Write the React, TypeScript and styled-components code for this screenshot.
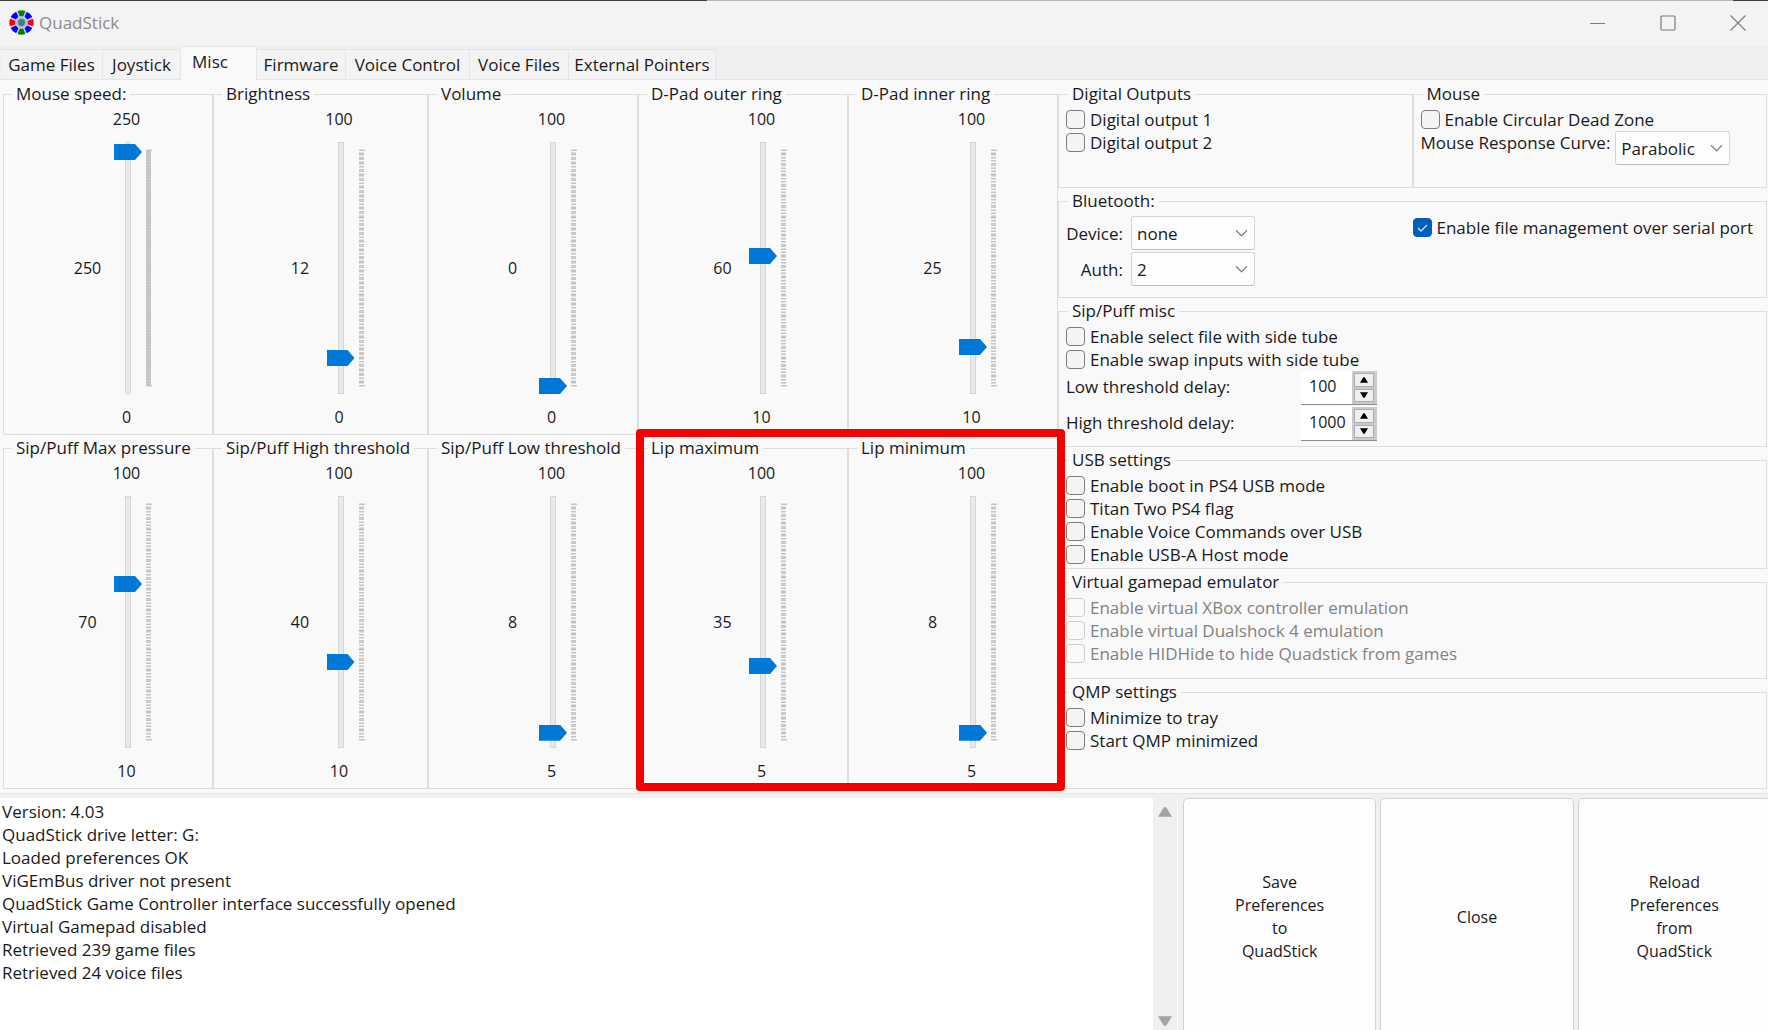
import React, { useState } from 'react';
import styled, { createGlobalStyle } from 'styled-components';

const LINE = '#dedede';
const INK = '#1a1a1a';

const GlobalStyle = createGlobalStyle`
  *, *::before, *::after { box-sizing: border-box; }
  body { margin: 0; background: #f0f0f0; }
  body, button, input, select, textarea {
    font-family: "Open Sans", "Noto Sans", sans-serif;
    font-size: 17px;
    line-height: 23px;
    color: ${INK};
  }
`;

const Window = styled.div`
  display: flex;
  flex-direction: column;
  height: 100vh;
  min-height: 960px;
  overflow: hidden;
`;

const DesktopEdge = styled.div`
  flex: none;
  height: 1px;
  background: linear-gradient(90deg, #443f43 0 40%, #b9b7ba 40% 98%, #443f43 98%);
`;

const TitleBar = styled.header`
  display: flex;
  flex: none;
  align-items: center;
  height: 45px;
  padding: 0 9px 2px;
  background: #f3f3f3;
`;

const AppTitle = styled.h1`
  flex: 1;
  margin: 0 0 0 5px;
  font-size: 17px;
  font-weight: 400;
  color: #8c8c8c;
`;

const CaptionButtons = styled.div`
  display: flex;
  gap: 28px;
`;

const CaptionButton = styled.button`
  display: grid;
  place-items: center;
  width: 42px;
  height: 36px;
  padding: 0;
  border: 0;
  background: none;
`;

const TabStrip = styled.div`
  display: flex;
  flex: none;
  align-items: flex-end;
  height: 34px;
  padding-left: 1px;
  border-bottom: 1px solid #e5e5e5;
  background: #efefef;
`;

const Tab = styled.button<{ $width: number; $active?: boolean }>`
  width: ${p => p.$width}px;
  height: ${p => (p.$active ? 34 : 30)}px;
  margin-bottom: ${p => (p.$active ? -1 : 0)}px;
  padding: ${p => (p.$active ? '0 17px 4px 0' : '0')};
  border: 1px solid #e5e5e5;
  border-width: 1px 1px 0 0;
  background: ${p => (p.$active ? '#f9f9f9' : '#f3f3f3')};
  white-space: nowrap;
`;

const Page = styled.main`
  display: grid;
  flex: none;
  grid-template-columns: 210fr 215fr 210fr 210fr 210fr 709fr;
  grid-template-rows: auto auto;
  row-gap: 2px;
  padding: 3px 1px 4px 3px;
  border-bottom: 1px solid #e5e5e5;
  background: #f9f9f9;
`;

const Group = styled.fieldset`
  min-width: 0;
  margin: 0;
  padding: 3px 7px 0;
  border: 1px solid ${LINE};
`;

const Legend = styled.legend`
  height: 22px;
  margin-left: 2px;
  padding: 0 4px;
  line-height: 22px;
  white-space: nowrap;
`;

const SliderGroup = styled(Group)<{ $column: number; $row: number }>`
  grid-column: ${p => p.$column};
  grid-row: ${p => p.$row};
  padding: 3px 0 6px;
  & > legend { margin-left: 8px; }
`;

const SliderGrid = styled.div`
  display: grid;
  grid-template-columns: 1fr 39px 39px 1fr;
  grid-template-rows: 22px 276px 22px;
  align-items: center;
  padding-right: 2px;
  font-size: 16px;
  line-height: 22px;
`;

const Limit = styled.span`
  grid-column: 3;
  text-align: center;
`;

const Current = styled.output`
  grid-column: 2;
  grid-row: 1 / 4;
  font-size: 16px;
  text-align: center;
`;

const Range = styled.input`
  grid-column: 3;
  grid-row: 2;
  appearance: none;
  writing-mode: vertical-lr;
  direction: rtl;
  width: 28px;
  height: 252px;
  margin: 0 0 0 7px;
  background: none;

  &::-webkit-slider-runnable-track {
    width: 6px;
    height: 252px;
    border: 1px solid #d6d6d6;
    background: #e7eaea;
  }

  &::-webkit-slider-thumb {
    appearance: none;
    width: 28px;
    height: 16px;
    margin: -1px 0 -1px -12px;
    background: #0078d7;
    clip-path: polygon(0 0, 75% 0, 100% 50%, 75% 100%, 0 100%);
  }
`;

const Ticks = styled.svg`
  grid-column: 4;
  grid-row: 2;
`;

const RedFrame = styled.div`
  grid-column: 4 / 6;
  grid-row: 2;
  z-index: 1;
  margin: -8px -7px -2px -2px;
  border: 8px solid #f50000;
  border-radius: 4px;
  pointer-events: none;
`;

const Options = styled.div`
  display: grid;
  grid-column: 6;
  grid-row: 1 / 3;
  grid-template-rows: 105fr 108fr 147fr 120fr 108fr 108fr;
  gap: 2px 0;
`;

const Halves = styled.div`
  display: grid;
  grid-template-columns: 1fr 1fr;
`;

const BluetoothBody = styled.div`
  display: grid;
  grid-template-columns: 1fr 1fr;
  padding-top: 1px;
`;

const BluetoothFields = styled.div`
  display: grid;
  grid-template-columns: 57px 124px;
  gap: 2px 8px;
  align-items: center;
  justify-items: end;
`;

const Check = styled.label<{ $muted?: boolean }>`
  display: flex;
  align-items: center;
  gap: 5px;
  width: max-content;
  height: 23px;
  color: ${p => (p.$muted ? '#838383' : INK)};
  white-space: nowrap;
`;

const Box = styled.input`
  appearance: none;
  flex: none;
  width: 19px;
  height: 19px;
  margin: 0;
  border: 1px solid #7d7d7d;
  border-radius: 4px;
  background: #f4f4f4;

  &:disabled {
    border-color: #cdcdcd;
    background: #fafafa;
  }

  &:checked {
    border-color: #005fb8;
    background: #005fb8 url("data:image/svg+xml,%3Csvg xmlns='http://www.w3.org/2000/svg' viewBox='0 0 17 17'%3E%3Cpath d='M4 9l3 3 6-6' fill='none' stroke='%23cfe3f6' stroke-width='1.3'/%3E%3C/svg%3E") center / 17px 17px no-repeat;
  }
`;

const Select = styled.select<{ $width: number }>`
  appearance: none;
  width: ${p => p.$width}px;
  height: 34px;
  padding: 0 20px 0 5px;
  border: 1px solid #d4d4d4;
  border-bottom-color: #bdbdbd;
  border-radius: 3px;
  background: #fdfdfd url("data:image/svg+xml,%3Csvg xmlns='http://www.w3.org/2000/svg' viewBox='0 0 14 8'%3E%3Cpath d='M1 1l6 6 6-6' fill='none' stroke='%23868686' stroke-width='1.4'/%3E%3C/svg%3E") right 6px center / 13px 8px no-repeat;
`;

const CurveRow = styled.div`
  display: flex;
  align-items: flex-start;
  gap: 5px;
  white-space: nowrap;
`;

const DelayRow = styled.div`
  display: grid;
  grid-template-columns: 235px 76px;
  height: 34px;
  margin-bottom: 2px;
  line-height: 31px;
`;

const Spinner = styled.div`
  display: grid;
  grid-template-columns: 1fr 25px;
  border-bottom: 1px solid #8e8e8e;
`;

const SpinInput = styled.input`
  min-width: 0;
  padding: 0 0 2px 8px;
  border: 0;
  background: #ffffff;
  font-size: 16px;
`;

const SpinButtons = styled.div`
  display: grid;
  grid-template-rows: 1fr 1fr;
  gap: 2px;
  padding: 2px 3px 2px 2px;
  background: #c9cacf;
`;

const SpinButton = styled.button`
  display: grid;
  place-items: center;
  min-height: 0;
  padding: 0;
  border: 1px solid #adadad;
  background: #efefef;
`;

const BottomPanel = styled.section`
  display: grid;
  flex: 1;
  grid-template-columns: 1153fr 25px 590fr;
  min-height: 0;
  padding-top: 4px;
  background: #f0f0f0;
`;

const Log = styled.textarea`
  width: 100%;
  height: 100%;
  padding: 2px;
  border: 0;
  outline: 0;
  resize: none;
  overflow: hidden;
  background: #ffffff;
  white-space: pre;
`;

const ScrollBar = styled.div`
  display: flex;
  flex-direction: column;
  justify-content: space-between;
  padding: 7px 0 2px;
  border-right: 1px solid #fafafa;
`;

const ScrollButton = styled.button`
  display: grid;
  place-items: center;
  height: 14px;
  padding: 0;
  border: 0;
  background: none;
`;

const Actions = styled.div`
  display: grid;
  grid-template-columns: 1fr 1fr 1fr;
  gap: 4px;
  margin: 0 -3px -6px 5px;
`;

const ActionButton = styled.button`
  padding: 0;
  border: 1px solid #d2d2d2;
  border-radius: 5px;
  background: #fdfdfd;
  font-size: 16px;
  white-space: pre-line;
`;

interface SliderSpec {
  name: string;
  min: number;
  max: number;
  value: number;
}

const SLIDERS: SliderSpec[] = [
  { name: 'Mouse speed:', min: 0, max: 250, value: 250 },
  { name: 'Brightness', min: 0, max: 100, value: 12 },
  { name: 'Volume', min: 0, max: 100, value: 0 },
  { name: 'D-Pad outer ring', min: 10, max: 100, value: 60 },
  { name: 'D-Pad inner ring', min: 10, max: 100, value: 25 },
  { name: 'Sip/Puff Max pressure', min: 10, max: 100, value: 70 },
  { name: 'Sip/Puff High threshold', min: 10, max: 100, value: 40 },
  { name: 'Sip/Puff Low threshold', min: 5, max: 100, value: 8 },
  { name: 'Lip maximum', min: 5, max: 100, value: 35 },
  { name: 'Lip minimum', min: 5, max: 100, value: 8 },
];

const SLIDERS_PER_ROW = 5;

const TABS = [
  { name: 'Game Files', width: 102 },
  { name: 'Joystick', width: 78 },
  { name: 'Misc', width: 76 },
  { name: 'Firmware', width: 89 },
  { name: 'Voice Control', width: 124 },
  { name: 'Voice Files', width: 99 },
  { name: 'External Pointers', width: 147 },
];

const LOG_LINES = [
  'Version: 4.03',
  'QuadStick drive letter: G:',
  'Loaded preferences OK',
  'ViGEmBus driver not present',
  'QuadStick Game Controller interface successfully opened',
  'Virtual Gamepad disabled',
  'Retrieved 239 game files',
  'Retrieved 24 voice files',
];

function Logo() {
  const colors = ['#008000', '#0000ff', '#ff0000', '#0000ff', '#008000', '#0000ff', '#ff0000', '#0000ff'];
  return (
    <svg width="25" height="25" viewBox="-12 -12 24 24" aria-hidden="true">
      <circle r="11" fill="#c9d2dc" />
      {colors.map((color, i) => (
        <path key={i} d="M-1.8 -6L-3.7 -11Q0 -12.4 3.7 -11L1.8 -6Z" fill={color} transform={`rotate(${i * 45})`} />
      ))}
      <circle r="5" fill="#a9b9bb" />
      <circle r="3.3" fill="#3b8083" />
    </svg>
  );
}

/* Marks snap to a 1.5px device grid, so dense scales merge into short blocks. */
function TickMarks({ steps }: { steps: number }) {
  const cell = 1.5;
  const travel = 235;
  return (
    <Ticks width="7" height="252" aria-hidden="true">
      {Array.from({ length: steps + 1 }, (_, i) => {
        const end = i === 0 || i === steps;
        const y = 7.5 + Math.round((i * travel) / cell / steps) * cell;
        return <rect key={i} x="0" y={y} width={end ? 6 : 5} height={cell} fill="#c4c4c4" />;
      })}
    </Ticks>
  );
}

function SliderPanel({ spec, index }: { spec: SliderSpec; index: number }) {
  const { name, min, max, value } = spec;
  const [current, setCurrent] = useState(value);
  return (
    <SliderGroup $column={(index % SLIDERS_PER_ROW) + 1} $row={Math.floor(index / SLIDERS_PER_ROW) + 1}>
      <Legend>{name}</Legend>
      <SliderGrid>
        <Limit>{max}</Limit>
        <Current>{current}</Current>
        <Range
          type="range"
          aria-label={name}
          min={min}
          max={max}
          value={current}
          onChange={e => setCurrent(Number(e.target.value))}
        />
        <TickMarks steps={max - min} />
        <Limit>{min}</Limit>
      </SliderGrid>
    </SliderGroup>
  );
}

function CheckOption({ text, checked, disabled }: { text: string; checked?: boolean; disabled?: boolean }) {
  return (
    <Check $muted={disabled}>
      <Box type="checkbox" defaultChecked={checked} disabled={disabled} />
      {text}
    </Check>
  );
}

function Arrow({ down, size, color }: { down?: boolean; size: number; color: string }) {
  return (
    <svg width={size} height={size} viewBox="0 0 12 12" aria-hidden="true">
      <path d={down ? 'M0 2H12L7 10H5Z' : 'M0 10H12L7 2H5Z'} fill={color} />
    </svg>
  );
}

function DelayField({ id, label, initial }: { id: string; label: string; initial: number }) {
  const [delay, setDelay] = useState(initial);
  return (
    <DelayRow>
      <label htmlFor={id}>{label}</label>
      <Spinner>
        <SpinInput id={id} type="text" value={delay} onChange={e => setDelay(Number(e.target.value) || 0)} />
        <SpinButtons>
          <SpinButton aria-label="Increase" onClick={() => setDelay(delay + 1)}>
            <Arrow size={8} color="#000000" />
          </SpinButton>
          <SpinButton aria-label="Decrease" onClick={() => setDelay(delay - 1)}>
            <Arrow down size={8} color="#000000" />
          </SpinButton>
        </SpinButtons>
      </Spinner>
    </DelayRow>
  );
}

export default function App() {
  const [tab, setTab] = useState('Misc');
  return (
    <Window>
      <GlobalStyle />
      <DesktopEdge />
      <TitleBar>
        <Logo />
        <AppTitle>QuadStick</AppTitle>
        <CaptionButtons>
          <CaptionButton aria-label="Minimize">
            <svg width="16" height="16" viewBox="0 0 16 16"><path d="M0 8.5H15" stroke="#7d7d7d" /></svg>
          </CaptionButton>
          <CaptionButton aria-label="Maximize">
            <svg width="16" height="16" viewBox="0 0 16 16"><rect x="1" y="1" width="14" height="14" rx="1" fill="none" stroke="#7d7d7d" strokeWidth="1.2" /></svg>
          </CaptionButton>
          <CaptionButton aria-label="Close window">
            <svg width="16" height="16" viewBox="0 0 16 16"><path d="M.5 .5l15 15M15.5 .5l-15 15" stroke="#7d7d7d" strokeWidth="1.2" /></svg>
          </CaptionButton>
        </CaptionButtons>
      </TitleBar>
      <TabStrip role="tablist">
        {TABS.map(t => (
          <Tab key={t.name} role="tab" aria-selected={t.name === tab} $width={t.width} $active={t.name === tab} onClick={() => setTab(t.name)}>
            {t.name}
          </Tab>
        ))}
      </TabStrip>
      <Page>
        {SLIDERS.map((spec, index) => (
          <SliderPanel key={spec.name} spec={spec} index={index} />
        ))}
        <RedFrame />
        <Options>
          <Halves>
            <Group>
              <Legend>Digital Outputs</Legend>
              <CheckOption text="Digital output 1" />
              <CheckOption text="Digital output 2" />
            </Group>
            <Group>
              <Legend>Mouse</Legend>
              <CheckOption text="Enable Circular Dead Zone" />
              <CurveRow>
                <label htmlFor="curve">Mouse Response Curve:</label>
                <Select id="curve" $width={115}><option>Parabolic</option></Select>
              </CurveRow>
            </Group>
          </Halves>
          <Group>
            <Legend>Bluetooth:</Legend>
            <BluetoothBody>
              <BluetoothFields>
                <label htmlFor="device">Device:</label>
                <Select id="device" $width={124}><option>none</option></Select>
                <label htmlFor="auth">Auth:</label>
                <Select id="auth" $width={124}><option>2</option></Select>
              </BluetoothFields>
              <CheckOption text="Enable file management over serial port" checked />
            </BluetoothBody>
          </Group>
          <Group>
            <Legend>Sip/Puff misc</Legend>
            <CheckOption text="Enable select file with side tube" />
            <CheckOption text="Enable swap inputs with side tube" />
            <DelayField id="low-delay" label="Low threshold delay:" initial={100} />
            <DelayField id="high-delay" label="High threshold delay:" initial={1000} />
          </Group>
          <Group>
            <Legend>USB settings</Legend>
            <CheckOption text="Enable boot in PS4 USB mode" />
            <CheckOption text="Titan Two PS4 flag" />
            <CheckOption text="Enable Voice Commands over USB" />
            <CheckOption text="Enable USB-A Host mode" />
          </Group>
          <Group>
            <Legend>Virtual gamepad emulator</Legend>
            <CheckOption text="Enable virtual XBox controller emulation" disabled />
            <CheckOption text="Enable virtual Dualshock 4 emulation" disabled />
            <CheckOption text="Enable HIDHide to hide Quadstick from games" disabled />
          </Group>
          <Group>
            <Legend>QMP settings</Legend>
            <CheckOption text="Minimize to tray" />
            <CheckOption text="Start QMP minimized" />
          </Group>
        </Options>
      </Page>
      <BottomPanel>
        <Log readOnly aria-label="Status messages" defaultValue={LOG_LINES.join('\n')} />
        <ScrollBar>
          <ScrollButton aria-label="Scroll up"><Arrow size={14} color="#a3a3a3" /></ScrollButton>
          <ScrollButton aria-label="Scroll down"><Arrow down size={14} color="#a3a3a3" /></ScrollButton>
        </ScrollBar>
        <Actions>
          <ActionButton>{'Save\nPreferences\nto\nQuadStick'}</ActionButton>
          <ActionButton>Close</ActionButton>
          <ActionButton>{'Reload\nPreferences\nfrom\nQuadStick'}</ActionButton>
        </Actions>
      </BottomPanel>
    </Window>
  );
}
